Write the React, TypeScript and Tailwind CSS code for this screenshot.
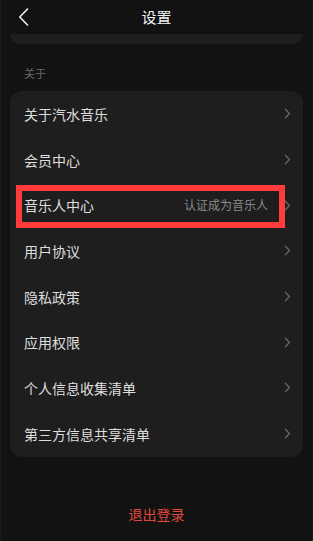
import React from "react";

const rows: { label: string; hint?: string; marked?: boolean }[] = [
    { label: "关于汽水音乐" },
    { label: "会员中心" },
    { label: "音乐人中心", hint: "认证成为音乐人", marked: true },
    { label: "用户协议" },
    { label: "隐私政策" },
    { label: "应用权限" },
    { label: "个人信息收集清单" },
    { label: "第三方信息共享清单" },
];

function Chevron() {
    return (
        <svg width="7" height="11" viewBox="0 0 7 11" fill="none">
            <path
                d="M1.4 1.2 L5.4 5.5 L1.4 9.8"
                stroke="#666666"
                strokeWidth="1.3"
                strokeLinecap="round"
                strokeLinejoin="round"
            />
        </svg>
    );
}

function SettingRow({
    label,
    hint,
    marked,
}: {
    label: string;
    hint?: string;
    marked?: boolean;
}) {
    return (
        <div className="relative flex h-[45.7px] items-center pl-[14px] pr-[12px]">
            <span className="flex-1 text-[14px] leading-none text-[#dedede]">
                {label}
            </span>
            {hint && (
                <span className="mr-[16px] text-[12px] leading-none text-[#8a8a8a]">
                    {hint}
                </span>
            )}
            <Chevron />
            {marked && (
                <div className="pointer-events-none absolute left-[6px] top-[3px] h-[43px] w-[269px] border-[6px] border-[#ff3b3b]" />
            )}
        </div>
    );
}

export default function App() {
    return (
        <div
            className="flex h-[541px] w-[313px] flex-col border-x border-[#1b1b1b] bg-[#121212]"
            style={{ fontFamily: '"Noto Sans CJK SC", "Noto Sans", sans-serif' }}
        >
            {/* header */}
            <div className="relative flex h-[34px] shrink-0 items-center justify-center">
                <svg
                    className="absolute left-[17px] top-[8px]"
                    width="11"
                    height="18"
                    viewBox="0 0 11 18"
                    fill="none"
                >
                    <path
                        d="M9.5 1 L1.8 9 L9.5 17"
                        stroke="#f0f0f0"
                        strokeWidth="1.6"
                        strokeLinecap="round"
                        strokeLinejoin="round"
                    />
                </svg>
                <span className="mt-[-2px] text-[15px] leading-none text-[#f2f2f2]">
                    设置
                </span>
            </div>

            {/* tail of previous group */}
            <div className="mx-[9px] h-[10px] shrink-0 rounded-b-[12px] bg-[#1e1e1e]" />

            <div className="flex h-[47px] shrink-0 items-center pl-[23px] pt-[11px]">
                <span className="text-[11px] leading-none text-[#6a6a6a]">
                    关于
                </span>
            </div>

            <div className="mx-[9px] rounded-[12px] bg-[#1e1e1e]">
                {rows.map((r) => (
                    <SettingRow key={r.label} {...r} />
                ))}
            </div>

            <div className="flex flex-1 items-center justify-center pt-[31px]">
                <span className="text-[14px] leading-none text-[#e4493e]">
                    退出登录
                </span>
            </div>
        </div>
    );
}
